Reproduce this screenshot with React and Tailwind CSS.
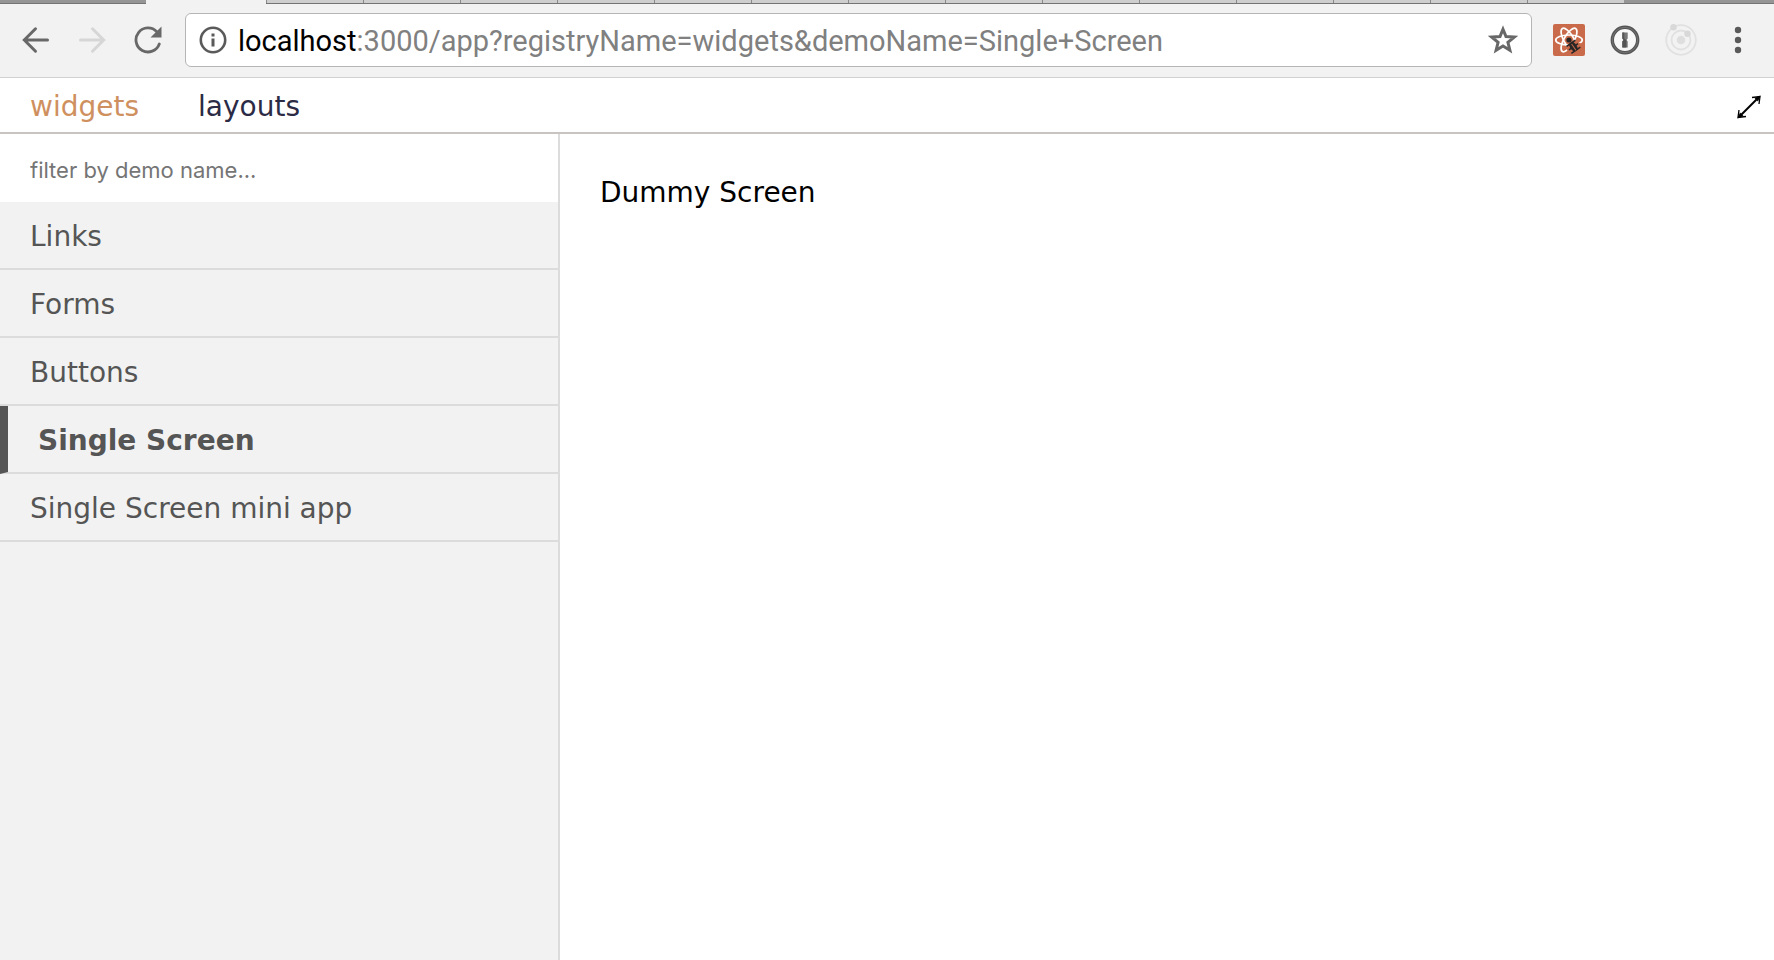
import { useState } from "react";

const backgroundTabs = Array.from({ length: 14 }, (_, i) => i);
const registries = ["widgets", "layouts"];
const demos = ["Links", "Forms", "Buttons", "Single Screen", "Single Screen mini app"];

function TabStrip() {
  return (
    <div className="flex h-1 bg-[#969696]" aria-hidden="true">
      <div className="w-[146px] shrink-0 border-b border-[#747474]" />
      <div className="w-[120px] shrink-0 bg-[#f2f2f2]" />
      <div className="flex min-w-0 flex-1 border-b border-[#747474]">
        {backgroundTabs.map((tab) => (
          <div key={tab} className="w-[97px] border-l border-[#8a8a8a] bg-[#cecece]" />
        ))}
      </div>
    </div>
  );
}

function BackIcon({ className }) {
  return (
    <svg viewBox="0 0 28 28" className={className} fill="none" stroke="currentColor" strokeWidth="3" strokeLinecap="round">
      <path d="M25.500 14H2.500M13.500 2.800L2.300 14l11.200 11.200" />
    </svg>
  );
}

function ReloadIcon() {
  return (
    <svg viewBox="0 0 28 28" className="size-7" fill="none" stroke="currentColor" strokeWidth="2.800">
      <path d="M25.300 18A12 12 0 1 1 22.800 5.800" strokeLinecap="round" />
      <path d="M27.500 .5v11H16.500z" fill="currentColor" stroke="none" />
    </svg>
  );
}

function InfoIcon() {
  return (
    <svg viewBox="0 0 28 28" className="size-7" fill="none" stroke="currentColor" strokeWidth="2.600">
      <circle cx="14" cy="14" r="12.200" />
      <path d="M14 12.500v8M14 7.500v3" strokeWidth="3" />
    </svg>
  );
}

function StarIcon() {
  return (
    <svg viewBox="0 0 30 30" className="size-[30px]" fill="none" stroke="currentColor" strokeWidth="3">
      <path d="M15 4.200l3 7.300 8.200.6-6.300 5.200 2 7.900L15 20.900l-6.900 4.300 2-7.900-6.300-5.200 8.200-.6z" />
    </svg>
  );
}

function ReactBugIcon() {
  return (
    <svg viewBox="0 0 32 32" className="size-8">
      <rect width="32" height="32" rx="2" fill="#c96b4a" />
      <g fill="none" stroke="#fff" strokeWidth="1.700">
        <ellipse cx="16" cy="16" rx="13.300" ry="5" />
        <ellipse cx="16" cy="16" rx="13.300" ry="5" transform="rotate(60 16 16)" />
        <ellipse cx="16" cy="16" rx="13.300" ry="5" transform="rotate(120 16 16)" />
      </g>
      <path d="M13 22.500l8-6.500 7 3.500-1 10.500H15.500z" fill="#c96b4a" />
      <circle cx="16" cy="16" r="2.600" fill="#262626" />
      <g transform="translate(20.300 22.500) rotate(-35)" fill="#262626" stroke="#262626">
        <path d="M-2.500-4.500h5l1 4.500-1 5h-5l-1-5z" stroke="none" />
        <path d="M-5.500-4h11M-5.500.3h11M-5.500 4.500h11" fill="none" strokeWidth="1.500" />
        <path d="M0-3v7.500" stroke="#c96b4a" strokeWidth="1" />
      </g>
    </svg>
  );
}

function KeyholeIcon() {
  return (
    <svg viewBox="0 0 30 30" className="size-[30px]">
      <circle cx="15" cy="15" r="12.700" fill="#f7f7f7" stroke="#555" strokeWidth="3.400" />
      <circle cx="15" cy="15" r="12.700" fill="none" stroke="#7b7b7b" strokeWidth=".8" />
      <path d="M12.300 7.500h5.400v6l-1.200 1.500 1.200 1.500v6h-5.400v-6l1.200-1.500-1.200-1.500z" fill="#777" />
      <path d="M12.300 7.500h2v6l2 1.500v7.500h-4v-6l1.200-1.500-1.200-1.500z" fill="#555" />
    </svg>
  );
}

function OrbitIcon() {
  return (
    <svg viewBox="0 0 32 32" className="size-8" fill="none" stroke="#e1e1e1" strokeWidth="1.800">
      <circle cx="16" cy="16" r="14.800" />
      <circle cx="16" cy="16" r="9.500" />
      <circle cx="16" cy="16" r="4.300" fill="#dedede" stroke="none" />
      <circle cx="8.500" cy="3.200" r="3.200" fill="#d8d8d8" stroke="none" />
      <circle cx="22.500" cy="9.800" r="3.200" fill="#d8d8d8" stroke="none" />
    </svg>
  );
}

function Toolbar() {
  return (
    <div className="flex h-[74px] items-center border-b border-[#d2d2d2] bg-[#f2f2f2] pr-5 pb-px pl-[22px] text-[#686868]">
      <div className="flex shrink-0 items-center gap-7 pr-[23px]">
        <button aria-label="Back"><BackIcon className="size-7" /></button>
        <button aria-label="Forward" className="text-[#d6d6d6]"><BackIcon className="size-7 -scale-x-100" /></button>
        <button aria-label="Reload"><ReloadIcon /></button>
      </div>
      <div className="flex h-[54px] min-w-0 flex-1 items-center rounded-md border border-[#b5b5b5] bg-white px-[13px]">
        <button aria-label="Site information" className="text-[#5a5a5a]"><InfoIcon /></button>
        <div
          role="textbox"
          aria-label="Address"
          tabIndex={0}
          className="min-w-0 flex-1 overflow-hidden pt-0.5 pl-[11px] font-['Roboto',sans-serif] text-[29px] leading-8 whitespace-nowrap text-[#808080]"
        >
          <span className="text-black">localhost</span>:3000/app?registryName=widgets&amp;demoName=Single+Screen
        </div>
        <button aria-label="Bookmark this page"><StarIcon /></button>
      </div>
      <div className="flex shrink-0 items-center gap-[25px] pl-[21px]">
        <button aria-label="React developer tools"><ReactBugIcon /></button>
        <button aria-label="Password manager"><KeyholeIcon /></button>
        <button aria-label="Orbit extension"><OrbitIcon /></button>
        <button aria-label="Browser menu" className="flex w-8 justify-center text-[#5a5a5a]">
          <svg viewBox="0 0 8 28" className="h-7 w-2" fill="currentColor">
            <circle cx="4" cy="4" r="3.200" />
            <circle cx="4" cy="14" r="3.200" />
            <circle cx="4" cy="24" r="3.200" />
          </svg>
        </button>
      </div>
    </div>
  );
}

function DemoItem({ name, selected, onSelect }) {
  return (
    <li>
      <button
        onClick={onSelect}
        aria-current={selected ? "page" : undefined}
        className={
          selected
            ? "block h-[68px] w-full border-b-2 border-l-8 border-b-[#dcdcdc] border-l-[#555] pt-1 pl-[30px] text-left font-bold"
            : "block h-[68px] w-full border-b-2 border-[#dcdcdc] pt-1 pl-[30px] text-left"
        }
      >
        {name}
      </button>
    </li>
  );
}

export default function App() {
  const [registry, setRegistry] = useState("widgets");
  const [demo, setDemo] = useState("Single Screen");
  const [filter, setFilter] = useState("");
  const visible = demos.filter((name) => name.toLowerCase().includes(filter.toLowerCase()));

  return (
    <div className="flex min-h-screen flex-col bg-white font-['DejaVu_Sans',Verdana,sans-serif] text-[28px] leading-8">
      <TabStrip />
      <Toolbar />
      <header className="flex h-14 items-center justify-between border-b-2 border-[#c8c4c2] pt-1 pr-3 pl-[30px]">
        <nav className="flex gap-[59px]">
          {registries.map((name) => (
            <a
              key={name}
              href={"#" + name}
              onClick={() => setRegistry(name)}
              className={name === registry ? "text-[#cf9060]" : "text-[#2b2b45]"}
            >
              {name}
            </a>
          ))}
        </nav>
        <button aria-label="Full screen">
          <svg viewBox="0 0 26 26" className="size-[26px]" fill="none" stroke="#000" strokeWidth="2">
            <path d="M3 23L23 3" />
            <path d="M16 3.500L24 2.500L23 10M3 16L2 23.500L10 22.500" strokeWidth="1.300" />
            <path d="M24.500 1.500l-6 2.500 3.500 3.500zM1.500 24.500l2.500-6 3.500 3.500z" fill="#000" stroke="none" />
          </svg>
        </button>
      </header>
      <div className="flex flex-1">
        <aside className="w-[560px] shrink-0 border-r-2 border-[#dcdcdc] bg-[#f2f2f2] text-[#555]">
          <input
            aria-label="Filter demos"
            placeholder="filter by demo name..."
            value={filter}
            onChange={(event) => setFilter(event.target.value)}
            className="block h-[68px] w-full bg-white pt-1 pl-[30px] font-['Inter',sans-serif] text-[22px] outline-none placeholder:text-[#757575]"
          />
          <ul>
            {visible.map((name) => (
              <DemoItem key={name} name={name} selected={name === demo} onSelect={() => setDemo(name)} />
            ))}
          </ul>
        </aside>
        <main className="min-w-0 flex-1 px-10 pt-[43px] text-black">Dummy Screen</main>
      </div>
    </div>
  );
}
